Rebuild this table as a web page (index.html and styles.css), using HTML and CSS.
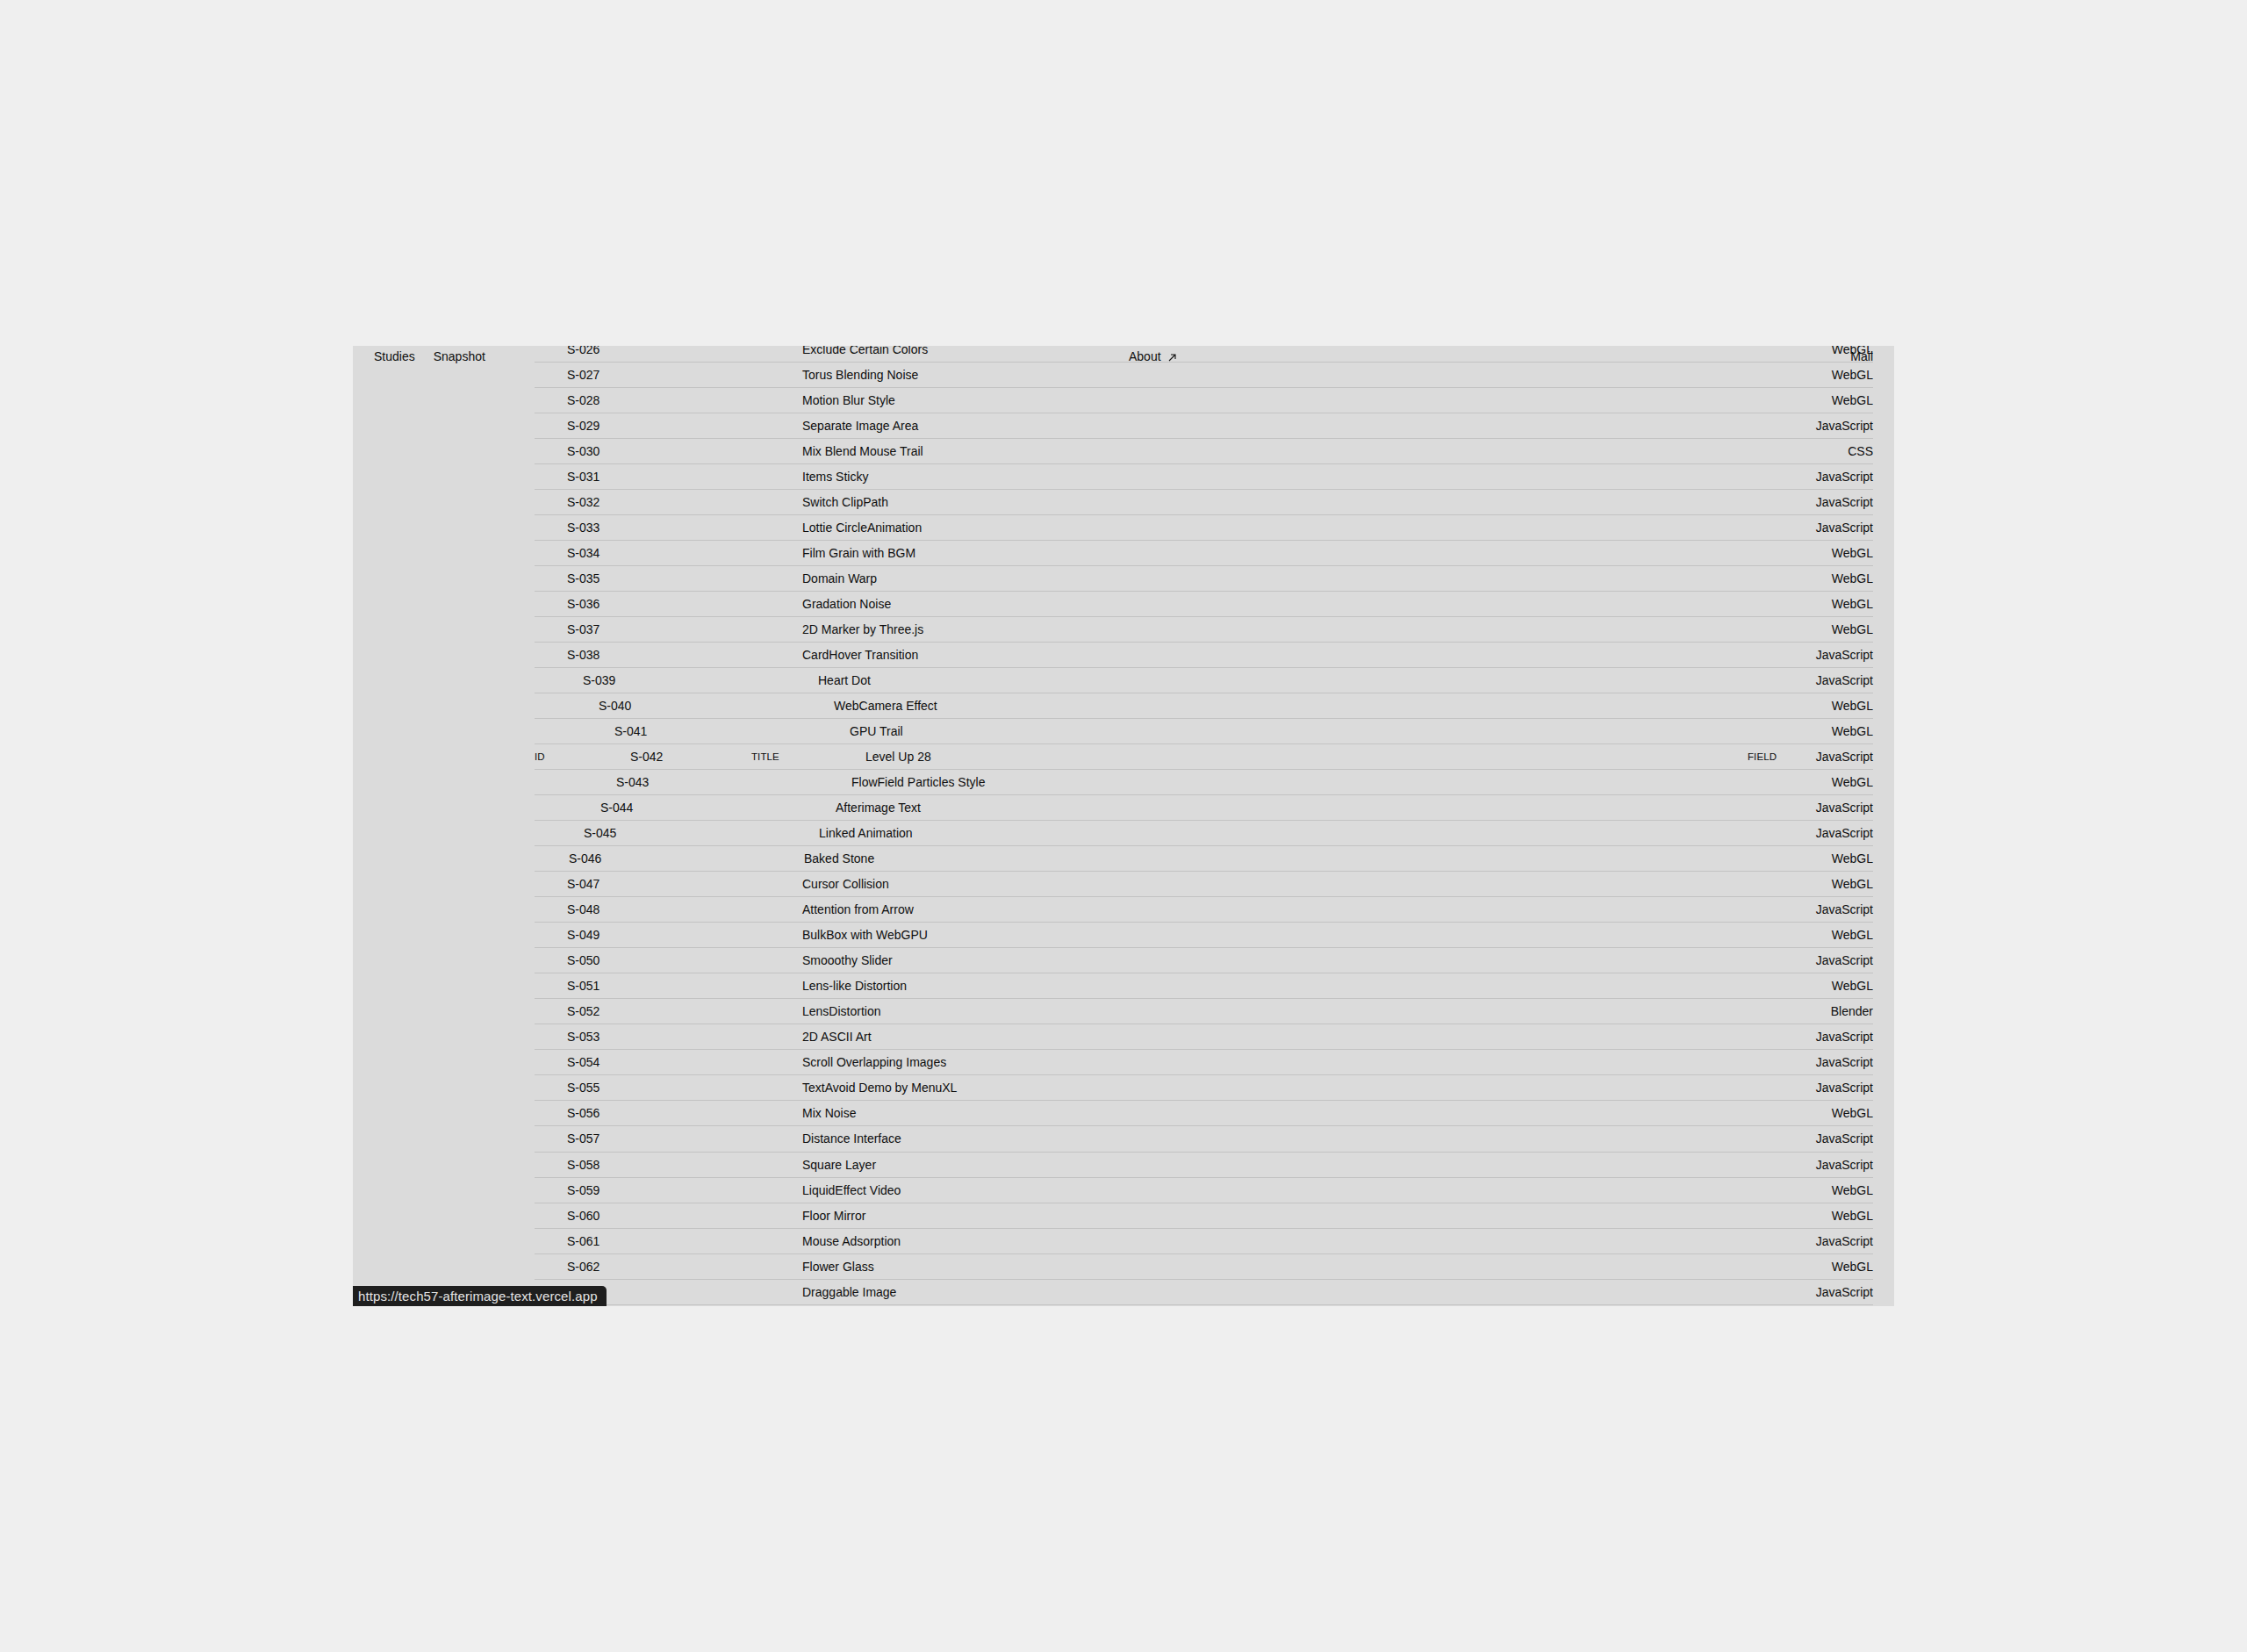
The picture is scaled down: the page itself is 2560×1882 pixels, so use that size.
FILE: index.html
```html
<!DOCTYPE html>
<html lang="en">
<head>
<meta charset="utf-8">
<title>Studies</title>
<link rel="stylesheet" href="styles.css">
</head>
<body>
<div class="viewport">
  <header class="site-header">
    <nav class="nav-left">
      <a class="nav-link" href="#">Studies</a>
      <a class="nav-link" href="#">Snapshot</a>
    </nav>
    <a class="nav-link about" href="#">About<svg class="arrow" width="9" height="9" viewBox="0 0 9 9"><path d="M1 8 L8 1 M3 1 H8 V6" fill="none" stroke="#111" stroke-width="1.1"/></svg></a>
    <a class="nav-link mail" href="#">Mail</a>
  </header>

  <main class="list">
    <div class="row"><span class="c-id">S-026</span><span class="c-title">Exclude Certain Colors</span><span class="c-field">WebGL</span></div>
    <div class="row"><span class="c-id">S-027</span><span class="c-title">Torus Blending Noise</span><span class="c-field">WebGL</span></div>
    <div class="row"><span class="c-id">S-028</span><span class="c-title">Motion Blur Style</span><span class="c-field">WebGL</span></div>
    <div class="row"><span class="c-id">S-029</span><span class="c-title">Separate Image Area</span><span class="c-field">JavaScript</span></div>
    <div class="row"><span class="c-id">S-030</span><span class="c-title">Mix Blend Mouse Trail</span><span class="c-field">CSS</span></div>
    <div class="row"><span class="c-id">S-031</span><span class="c-title">Items Sticky</span><span class="c-field">JavaScript</span></div>
    <div class="row"><span class="c-id">S-032</span><span class="c-title">Switch ClipPath</span><span class="c-field">JavaScript</span></div>
    <div class="row"><span class="c-id">S-033</span><span class="c-title">Lottie CircleAnimation</span><span class="c-field">JavaScript</span></div>
    <div class="row"><span class="c-id">S-034</span><span class="c-title">Film Grain with BGM</span><span class="c-field">WebGL</span></div>
    <div class="row"><span class="c-id">S-035</span><span class="c-title">Domain Warp</span><span class="c-field">WebGL</span></div>
    <div class="row"><span class="c-id">S-036</span><span class="c-title">Gradation Noise</span><span class="c-field">WebGL</span></div>
    <div class="row"><span class="c-id">S-037</span><span class="c-title">2D Marker by Three.js</span><span class="c-field">WebGL</span></div>
    <div class="row"><span class="c-id">S-038</span><span class="c-title">CardHover Transition</span><span class="c-field">JavaScript</span></div>
    <div class="row" style="--shift:18px"><span class="c-id">S-039</span><span class="c-title">Heart Dot</span><span class="c-field">JavaScript</span></div>
    <div class="row" style="--shift:36px"><span class="c-id">S-040</span><span class="c-title">WebCamera Effect</span><span class="c-field">WebGL</span></div>
    <div class="row" style="--shift:54px"><span class="c-id">S-041</span><span class="c-title">GPU Trail</span><span class="c-field">WebGL</span></div>
    <div class="row is-hover" style="--shift:72px"><span class="c-label l-id">ID</span><span class="c-id">S-042</span><span class="c-label l-title">TITLE</span><span class="c-title">Level Up 28</span><span class="c-label l-field">FIELD</span><span class="c-field">JavaScript</span></div>
    <div class="row" style="--shift:56px"><span class="c-id">S-043</span><span class="c-title">FlowField Particles Style</span><span class="c-field">WebGL</span></div>
    <div class="row" style="--shift:38px"><span class="c-id">S-044</span><span class="c-title">Afterimage Text</span><span class="c-field">JavaScript</span></div>
    <div class="row" style="--shift:19px"><span class="c-id">S-045</span><span class="c-title">Linked Animation</span><span class="c-field">JavaScript</span></div>
    <div class="row" style="--shift:2px"><span class="c-id">S-046</span><span class="c-title">Baked Stone</span><span class="c-field">WebGL</span></div>
    <div class="row"><span class="c-id">S-047</span><span class="c-title">Cursor Collision</span><span class="c-field">WebGL</span></div>
    <div class="row"><span class="c-id">S-048</span><span class="c-title">Attention from Arrow</span><span class="c-field">JavaScript</span></div>
    <div class="row"><span class="c-id">S-049</span><span class="c-title">BulkBox with WebGPU</span><span class="c-field">WebGL</span></div>
    <div class="row"><span class="c-id">S-050</span><span class="c-title">Smooothy Slider</span><span class="c-field">JavaScript</span></div>
    <div class="row"><span class="c-id">S-051</span><span class="c-title">Lens-like Distortion</span><span class="c-field">WebGL</span></div>
    <div class="row"><span class="c-id">S-052</span><span class="c-title">LensDistortion</span><span class="c-field">Blender</span></div>
    <div class="row"><span class="c-id">S-053</span><span class="c-title">2D ASCII Art</span><span class="c-field">JavaScript</span></div>
    <div class="row"><span class="c-id">S-054</span><span class="c-title">Scroll Overlapping Images</span><span class="c-field">JavaScript</span></div>
    <div class="row"><span class="c-id">S-055</span><span class="c-title">TextAvoid Demo by MenuXL</span><span class="c-field">JavaScript</span></div>
    <div class="row"><span class="c-id">S-056</span><span class="c-title">Mix Noise</span><span class="c-field">WebGL</span></div>
    <div class="row"><span class="c-id">S-057</span><span class="c-title">Distance Interface</span><span class="c-field">JavaScript</span></div>
    <div class="row"><span class="c-id">S-058</span><span class="c-title">Square Layer</span><span class="c-field">JavaScript</span></div>
    <div class="row"><span class="c-id">S-059</span><span class="c-title">LiquidEffect Video</span><span class="c-field">WebGL</span></div>
    <div class="row"><span class="c-id">S-060</span><span class="c-title">Floor Mirror</span><span class="c-field">WebGL</span></div>
    <div class="row"><span class="c-id">S-061</span><span class="c-title">Mouse Adsorption</span><span class="c-field">JavaScript</span></div>
    <div class="row"><span class="c-id">S-062</span><span class="c-title">Flower Glass</span><span class="c-field">WebGL</span></div>
    <div class="row"><span class="c-id">S-063</span><span class="c-title">Draggable Image</span><span class="c-field">JavaScript</span></div>
  </main>

  <div class="status-bubble">https://tech57-afterimage-text.vercel.app</div>
</div>
</body>
</html>
```

FILE: styles.css
```css
* {
  box-sizing: border-box;
}

html, body {
  margin: 0;
  padding: 0;
}

body {
  background: #efefef;
  height: 100vh;
  display: flex;
  align-items: center;
  justify-content: center;
  font-family: "Liberation Sans", Arial, Helvetica, sans-serif;
  color: #0e0e0e;
}

.viewport {
  position: relative;
  width: 1756px;
  height: 1094px;
  background: #dbdbdb;
  overflow: hidden;
}

/* header overlays the scrolled list */
.site-header {
  position: absolute;
  top: 0;
  left: 0;
  right: 0;
  height: 24px;
  padding: 0 24px;
  display: grid;
  grid-template-columns: 860px 1fr auto;
  align-items: center;
  font-size: 14px;
  line-height: 24px;
  z-index: 2;
}

.nav-left {
  display: flex;
  gap: 21px;
}

.nav-link {
  color: #0e0e0e;
  text-decoration: none;
}

.about {
  display: inline-flex;
  align-items: center;
}

.arrow {
  margin-left: 8px;
  margin-top: 2px;
}

.list {
  margin: -10px 24px 0 207px;
}

.row {
  --shift: 0px;
  display: grid;
  grid-template-columns: 37px 210px 58px 1fr 60px 83px;
  grid-template-areas: "lid id ltitle title lfield field";
  align-items: center;
  height: 29.03px;
  border-bottom: 1px solid #c3c3c3;
  font-size: 14px;
  white-space: nowrap;
}

.c-id {
  grid-area: id;
  transform: translateX(var(--shift));
}

.c-title {
  grid-area: title;
  transform: translateX(var(--shift));
}

.c-field {
  grid-area: field;
  justify-self: end;
}

.c-label {
  font-size: 11.5px;
  letter-spacing: 0.1px;
}

.l-id { grid-area: lid; }
.l-title { grid-area: ltitle; }
.l-field { grid-area: lfield; }

.status-bubble {
  position: absolute;
  left: 0;
  bottom: 0;
  height: 23px;
  padding: 0 10px 0 6px;
  background: #1e1e1e;
  color: #e4e4e4;
  font-size: 15px;
  letter-spacing: 0.1px;
  line-height: 23px;
  border-top-right-radius: 5px;
  z-index: 3;
}
```
